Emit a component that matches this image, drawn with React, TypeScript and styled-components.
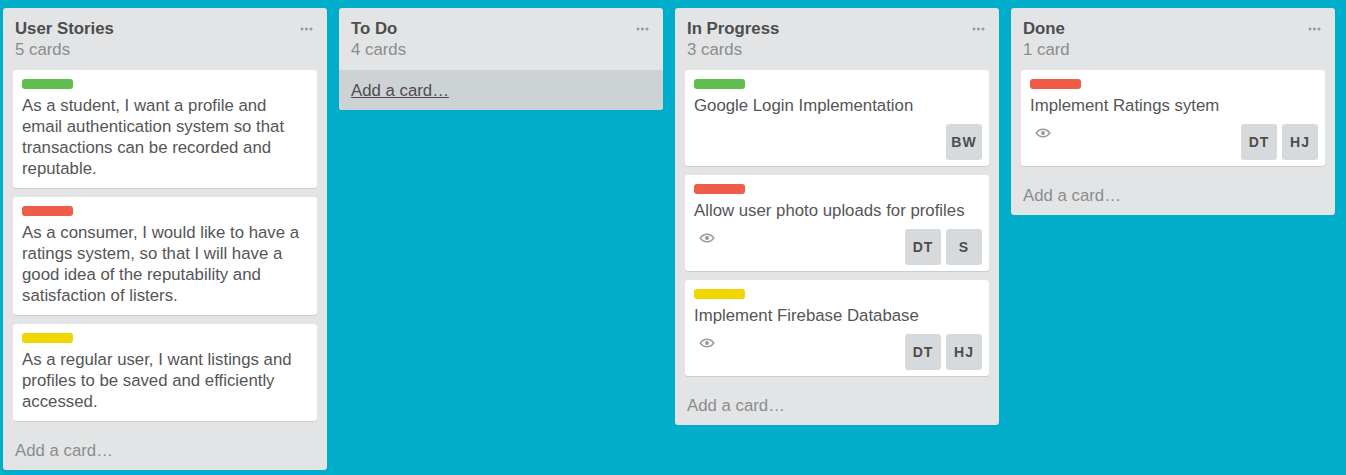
import React from "react";
import styled, { createGlobalStyle } from "styled-components";

const GlobalStyle = createGlobalStyle`
  html, body {
    margin: 0;
    padding: 0;
    height: 100%;
    background: #00aecc;
    overflow: hidden;
  }
`;

const Board = styled.div`
  display: flex;
  align-items: flex-start;
  gap: 12px;
  padding: 8px 0 0 3px;
  font-family: "Liberation Sans", Arial, sans-serif;
  font-size: 16.8px;
  line-height: 21px;
  color: #555;
`;

const List = styled.section`
  width: 324px;
  flex: none;
  background: #e2e4e6;
  border-radius: 3px;
  overflow: hidden;
`;

const ListHeader = styled.header`
  position: relative;
  height: 62px;
  box-sizing: border-box;
  padding: 10px 12px 0;
`;

const ListTitle = styled.h2`
  margin: 0;
  font-size: 16.8px;
  line-height: 21px;
  font-weight: 700;
  color: #4d4d4d;
`;

const CardCount = styled.div`
  color: #8c8c8c;
`;

const MenuDots = styled.svg`
  position: absolute;
  top: 19px;
  right: 14px;
  width: 13px;
  height: 4px;
  fill: #999;
`;

const Cards = styled.div`
  display: flex;
  flex-direction: column;
  gap: 8px;
  padding: 0 10px 8px;
`;

const Card = styled.article`
  box-sizing: border-box;
  background: #fff;
  border-radius: 3px;
  box-shadow: 0 1px 0 #ccc;
  margin-bottom: 1px;
  padding: 9px;
`;

const Label = styled.div<{ $color: string }>`
  width: 51px;
  height: 10px;
  border-radius: 3px;
  background: ${(p) => p.$color};
  margin-bottom: 6px;
`;

const CardText = styled.p`
  margin: 0;
`;

const CardFooter = styled.div`
  display: flex;
  justify-content: space-between;
  margin: 8px -2px -3px 0;
  height: 36px;
`;

const Eye = styled.svg`
  width: 16px;
  height: 12px;
  margin: 3px 0 0 5px;
`;

const Members = styled.div`
  display: flex;
  gap: 5px;
  margin-left: auto;
`;

const Member = styled.div`
  width: 36px;
  height: 36px;
  border-radius: 3px;
  background: #d6dadc;
  display: flex;
  align-items: center;
  justify-content: center;
  font-size: 14px;
  font-weight: 700;
  letter-spacing: 1px;
  color: #4d4d4d;
`;

const AddCard = styled.a<{ $active?: boolean }>`
  display: block;
  height: 40px;
  box-sizing: border-box;
  padding: 10px 12px;
  color: ${(p) => (p.$active ? "#4d4d4d" : "#8c8c8c")};
  background: ${(p) => (p.$active ? "#cdd2d4" : "transparent")};
  text-decoration: ${(p) => (p.$active ? "underline" : "none")};
`;

const GREEN = "#61bd4f";
const RED = "#ef5c48";
const YELLOW = "#f2d600";

type CardData = {
  label: string;
  text: string;
  watched?: boolean;
  members?: string[];
};

type ListData = {
  title: string;
  count: string;
  addActive?: boolean;
  cards: CardData[];
};

const lists: ListData[] = [
  {
    title: "User Stories",
    count: "5 cards",
    cards: [
      {
        label: GREEN,
        text: "As a student, I want a profile and email authentication system so that transactions can be recorded and reputable.",
      },
      {
        label: RED,
        text: "As a consumer, I would like to have a ratings system, so that I will have a good idea of the reputability and satisfaction of listers.",
      },
      {
        label: YELLOW,
        text: "As a regular user, I want listings and profiles to be saved and efficiently accessed.",
      },
    ],
  },
  { title: "To Do", count: "4 cards", addActive: true, cards: [] },
  {
    title: "In Progress",
    count: "3 cards",
    cards: [
      { label: GREEN, text: "Google Login Implementation", members: ["BW"] },
      {
        label: RED,
        text: "Allow user photo uploads for profiles",
        watched: true,
        members: ["DT", "S"],
      },
      {
        label: YELLOW,
        text: "Implement Firebase Database",
        watched: true,
        members: ["DT", "HJ"],
      },
    ],
  },
  {
    title: "Done",
    count: "1 card",
    cards: [
      {
        label: RED,
        text: "Implement Ratings sytem",
        watched: true,
        members: ["DT", "HJ"],
      },
    ],
  },
];

const EyeIcon = () => (
  <Eye viewBox="0 0 16 12">
    <path
      d="M1.2 6C3 3.4 5.3 2.2 8 2.2S13 3.4 14.8 6C13 8.6 10.7 9.8 8 9.8S3 8.6 1.2 6Z"
      fill="none"
      stroke="#999"
      strokeWidth="1.4"
    />
    <circle cx="8" cy="6" r="2" fill="#999" />
  </Eye>
);

const App = () => (
  <Board>
    <GlobalStyle />
    {lists.map((list) => (
      <List key={list.title}>
        <ListHeader>
          <ListTitle>{list.title}</ListTitle>
          <CardCount>{list.count}</CardCount>
          <MenuDots viewBox="0 0 13 4">
            <circle cx="2" cy="2" r="1.5" />
            <circle cx="6.5" cy="2" r="1.5" />
            <circle cx="11" cy="2" r="1.5" />
          </MenuDots>
        </ListHeader>
        {list.cards.length > 0 && (
          <Cards>
            {list.cards.map((card) => (
              <Card key={card.text}>
                <Label $color={card.label} />
                <CardText>{card.text}</CardText>
                {card.members && (
                  <CardFooter>
                    {card.watched && <EyeIcon />}
                    <Members>
                      {card.members.map((m) => (
                        <Member key={m}>{m}</Member>
                      ))}
                    </Members>
                  </CardFooter>
                )}
              </Card>
            ))}
          </Cards>
        )}
        <AddCard $active={list.addActive}>Add a card…</AddCard>
      </List>
    ))}
  </Board>
);

export default App;
